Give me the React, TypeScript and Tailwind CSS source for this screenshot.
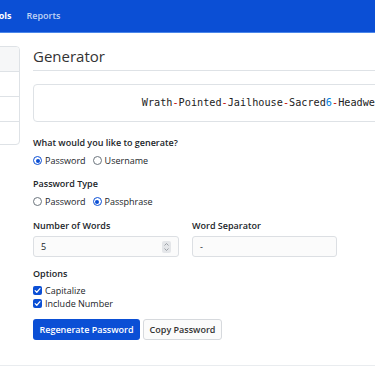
import React from "react";

const BLUE = "#0b4fd5";

function Radio({ checked, label }: { checked: boolean; label: string }) {
  return (
    <div className="flex items-center gap-[3px]">
      {checked ? (
        <span className="w-[9px] h-[9px] rounded-full border-[1.5px] border-[#0b4fd5] flex items-center justify-center">
          <span className="w-[4px] h-[4px] rounded-full bg-[#0b4fd5]" />
        </span>
      ) : (
        <span className="w-[9px] h-[9px] rounded-full border border-[#6c757d]" />
      )}
      <span>{label}</span>
    </div>
  );
}

function Check({ label }: { label: string }) {
  return (
    <div className="flex items-center gap-[3px] h-[13px]">
      <span className="w-[9px] h-[9px] rounded-[2px] bg-[#0b4fd5] flex items-center justify-center">
        <svg width="7" height="7" viewBox="0 0 8 8" fill="none">
          <path d="M1.3 4.2 L3.2 6 L6.8 1.8" stroke="white" strokeWidth="1.4" strokeLinecap="round" strokeLinejoin="round" />
        </svg>
      </span>
      <span>{label}</span>
    </div>
  );
}

export default function App() {
  const words = ["Wrath", "Pointed", "Jailhouse", "Sacred", "Headwear"];
  return (
    <div className="w-[375px] h-[366px] overflow-hidden bg-white font-['Open_Sans',sans-serif] text-[#212529]">
      <div className="h-[33px] bg-[#0b4fd5] border-b border-[#4a86ea] flex items-center gap-[15px] text-[9px] font-semibold">
        <span className="-ml-[12px] text-white font-bold">Tools</span>
        <span className="text-white/75">Reports</span>
      </div>
      <div className="flex mt-[13px]">
        <div className="w-[120px] -ml-[100px] shrink-0 h-[99px] border border-[#dee2e6] rounded-[4px] flex flex-col overflow-hidden">
          <div className="h-[25px] bg-[#f6f7f8] border-b border-[#dee2e6]" />
          <div className="h-[25px] border-b border-[#dee2e6]" />
          <div className="h-[25px] border-b border-[#dee2e6]" />
          <div className="flex-1" />
        </div>
        <div className="ml-[13px] w-[463px] shrink-0">
          <div className="text-[15px] leading-[20px] pb-[4px] border-b border-[#dee2e6] text-[#333]">Generator</div>
          <div className="mt-[13px] h-[38px] border border-[#dee2e6] rounded-[4px] flex items-center justify-center font-['DejaVu_Sans_Mono',monospace] text-[10.2px] text-[#222]">
            {words.map((w, i) => (
              <React.Fragment key={i}>
                {i > 0 && <span className="text-[#c40800]">-</span>}
                <span>{w}</span>
                {i === 3 && <span className="text-[#007fde]">6</span>}
              </React.Fragment>
            ))}
          </div>
          <div className="text-[9px] leading-[13px]">
            <div className="mt-[14px] font-semibold">What would you like to generate?</div>
            <div className="mt-[5px] flex items-center gap-[7px] h-[13px]">
              <Radio checked label="Password" />
              <Radio checked={false} label="Username" />
            </div>
            <div className="mt-[10px] font-semibold">Password Type</div>
            <div className="mt-[5px] flex items-center gap-[7px] h-[13px]">
              <Radio checked={false} label="Password" />
              <Radio checked label="Passphrase" />
            </div>
            <div className="mt-[11px] flex gap-[13px]">
              <div className="w-[146px]">
                <div className="font-semibold">Number of Words</div>
                <div className="mt-[4px] h-[21px] border border-[#dcdfe3] rounded-[3px] bg-[#fbfbfb] flex items-center justify-between pl-[7px] pr-[7px]">
                  <span>5</span>
                  <span className="w-[9px] h-[12px] bg-[#e4e6e9] rounded-[2px] flex flex-col items-center justify-center gap-[2px]">
                    <svg width="5" height="3" viewBox="0 0 5 3"><path d="M0.5 2.5 L2.5 0.5 L4.5 2.5" stroke="#8a8f95" strokeWidth="0.8" fill="none" /></svg>
                    <svg width="5" height="3" viewBox="0 0 5 3"><path d="M0.5 0.5 L2.5 2.5 L4.5 0.5" stroke="#8a8f95" strokeWidth="0.8" fill="none" /></svg>
                  </span>
                </div>
              </div>
              <div className="w-[145px]">
                <div className="font-semibold">Word Separator</div>
                <div className="mt-[4px] h-[21px] border border-[#dcdfe3] rounded-[3px] bg-[#fbfbfb] flex items-center pl-[7px]">
                  <span>-</span>
                </div>
              </div>
            </div>
            <div className="mt-[10px] font-semibold">Options</div>
            <div className="mt-[4px]">
              <Check label="Capitalize" />
              <Check label="Include Number" />
            </div>
            <div className="mt-[9px] flex gap-[3px]">
              <div className="w-[107px] h-[21px] rounded-[3px] bg-[#0b4fd5] text-white font-semibold flex items-center justify-center">Regenerate Password</div>
              <div className="w-[79px] h-[21px] rounded-[3px] bg-[#fbfbfb] border border-[#d6d9dd] text-[#333] font-semibold flex items-center justify-center">Copy Password</div>
            </div>
          </div>
        </div>
      </div>
      <div className="mt-[25px] -mx-[20px] border-t border-[#e9ecef]" />
    </div>
  );
}
